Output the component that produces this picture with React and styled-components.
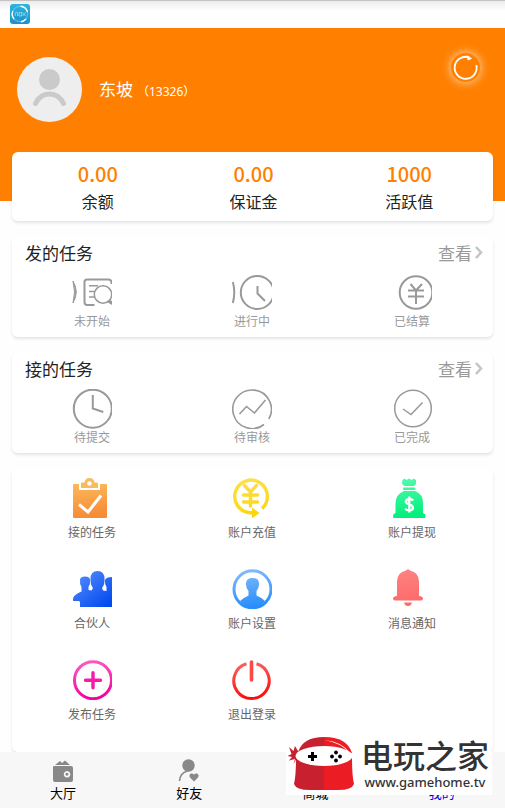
import React from 'react';
import styled, { createGlobalStyle } from 'styled-components';

const GlobalStyle = createGlobalStyle`
  * {
    box-sizing: border-box;
  }
  body {
    margin: 0;
    background: #fefefe;
    color: #222;
    font-family: "Noto Sans", "Noto Sans CJK SC", sans-serif;
  }
  h2, p {
    margin: 0;
  }
`;

const NotStartedIcon = () => (
  <Icon viewBox="0 0 40 40">
    <path d="M1 8Q7.500 19 1 30Q4 19 1 8Z" fill="#999" strokeWidth="1" />
    <path d="M39.500 11V9.500q0-3-3-3H15q-2.500 0-2.500 2.500v20q0 3 2.500 3h7.500" />
    <path d="M17 12.800h9M17 18.500h5M17 24h6" strokeWidth="1.500" />
    <circle cx="31" cy="21.500" r="8.700" strokeWidth="1.500" />
    <path d="M35 29l3-2 2 1v4z" fill="#999" stroke="none" />
  </Icon>
);

const RunningIcon = () => (
  <Icon viewBox="0 0 40 40">
    <path d="M.8 9Q3.800 19 .8 30" />
    <circle cx="25.300" cy="19.500" r="16.500" />
    <path d="M25.500 13v7.500l7.500 7.500" />
  </Icon>
);

const SettledIcon = () => (
  <Icon viewBox="0 0 40 40">
    <circle cx="24" cy="19.500" r="16.300" />
    <path d="M18.500 11l5.500 6.500 6-6.500M16 17.500h16M16 23.500h16M24 17v14" />
  </Icon>
);

const PendingIcon = () => (
  <Icon viewBox="0 0 40 40">
    <circle cx="20.800" cy="19.700" r="19" />
    <path d="M20.800 6v13.500l10.500 3.500" />
  </Icon>
);

const ReviewIcon = () => (
  <Icon viewBox="0 0 40 40" strokeWidth="1.600">
    <path d="M32 35.500A19.300 19.300 0 1 1 36.800 30" />
    <path d="M7.500 25l7-7.500 8 6.500 11-13" />
  </Icon>
);

const DoneIcon = () => (
  <Icon viewBox="0 0 40 40" strokeWidth="1.500">
    <circle cx="21" cy="19.500" r="18.300" />
    <path d="M11 20l8 5.500 11.500-12" />
  </Icon>
);

const ClipboardIcon = () => (
  <Icon viewBox="0 0 40 40">
    <Gradient id="clip" from="#fbc262" to="#f78b36" />
    <path d="M2 6h5v6h21V6h6q1 0 1 1v32q0 1-1 1H2q-1 0-1-1V7q0-1 1-1z" fill="url(#clip)" stroke="none" />
    <path d="M9 5.500q0-1 1-1h2.500Q13 0 17.500 0T22.500 4.500H25q1 0 1 1V10H9z" fill="#fabb5d" stroke="none" />
    <circle cx="17.500" cy="5.500" r="2.200" fill="#fff" stroke="none" />
    <path d="M7 26.500l9 7.500 13-16.500" stroke="#fff" strokeWidth="3" />
  </Icon>
);

const RechargeIcon = () => (
  <Icon viewBox="0 0 40 40">
    <Gradient id="yen" from="#fbe24e" to="#fdd50e" />
    <g stroke="url(#yen)" strokeWidth="3.400">
      <path d="M30 30.500A16.300 16.300 0 1 0 18 34.700h5" />
      <path d="M12.500 7.500l6 6.500 6-6.500M11.500 17h14M11.500 24h14M18.500 14v14" strokeLinecap="round" />
    </g>
    <path d="M20 29.500l7.500 5.500-7.500 5.500z" fill="#fdd50e" stroke="none" />
  </Icon>
);

const WithdrawIcon = () => (
  <Icon viewBox="0 0 40 40">
    <Gradient id="bag" from="#55fbb0" to="#03ef7c" />
    <g fill="url(#bag)" stroke="none">
      <path d="M10.500 2l2-1.500 2 1.500L17 .5 19.500 2l2-1.500L24 2v4l-2.500 2h-9L10 6z" />
      <rect x="11" y="9.500" width="12.500" height="2.500" rx="1" />
      <path d="M12 13h11q8 3 8 12v10q2.500.5 2.500 3 0 2.500-2 2.500h-29Q1 40.500 1 38q0-2.500 2.500-3V25Q4 16 12 13z" />
    </g>
    <path d="M21.300 22.500q-1.500-1.500-4-1.500T13.800 23.500q0 2 3.500 2.800T21 29.800q0 2.500-3.700 2.500-2.800 0-4.300-1.600M17.300 18.500v16" stroke="#fff" strokeWidth="2.300" />
  </Icon>
);

const PartnerIcon = () => (
  <Icon viewBox="0 0 40 40">
    <Gradient id="team" from="#5f94fd" to="#0249f0" diagonal />
    <path
      d="M1 30q0-4 8.500-7.500V18q-2-3-1.500-7.500Q8.500 7.500 13 7.500t5 3q.5 4.500-1.500 7.500v3l3 .5 1.500-2.500q-3-4-2.500-9Q18.500 2 25.500 2T32.500 10q.5 5-2.500 9l1 2.500 3.500.5v-4q-2-3-1.500-7 1-3 7-3v30H8v-5l-1-1H1z"
      fill="url(#team)"
      stroke="none"
    />
  </Icon>
);

const AccountIcon = () => (
  <Icon viewBox="0 0 40 40">
    <Gradient id="acc" from="#89bffd" to="#278efc" />
    <circle cx="20.500" cy="20.300" r="18.500" stroke="url(#acc)" strokeWidth="3" />
    <path d="M8 32q4-3.500 8.500-5.500V22q-3-4-2.500-8 .5-5 6.500-5t6.500 5q.500 4-2.500 8v4.500q5 2 8.500 5.500-5 6-12.500 6T8 32z" fill="url(#acc)" stroke="none" />
  </Icon>
);

const BellIcon = () => (
  <Icon viewBox="0 0 40 40">
    <Gradient id="bell" from="#fe8484" to="#fd6767" />
    <g fill="url(#bell)" stroke="none">
      <path d="M14 1.500q2-2.500 4 0 9 2 9 11V27q4 .5 4 2.500T29 31.500H3q-2 0-2-2T5 27V12.500q0-9 9-11z" />
      <path d="M12 33.500h8q-1 3.500-4 3.500t-4-3.500z" />
    </g>
  </Icon>
);

const PublishIcon = () => (
  <Icon viewBox="0 0 40 40">
    <Gradient id="pub" from="#fb63c6" to="#f3019d" />
    <circle cx="21" cy="20.200" r="18.500" stroke="url(#pub)" strokeWidth="3" />
    <path d="M13.500 20.200h15M21 12.700v15" stroke="#f51ba8" strokeWidth="3.400" strokeLinecap="round" />
  </Icon>
);

const LogoutIcon = () => (
  <Icon viewBox="0 0 40 40">
    <Gradient id="out" from="#fe6b6b" to="#fb0d0d" />
    <path d="M14.500 3.800A17.700 17.700 0 1 0 24.500 3.800" stroke="url(#out)" strokeWidth="3" />
    <path d="M19.500 2v18" stroke="#fc4a4a" strokeWidth="3.600" strokeLinecap="round" />
  </Icon>
);

const Gradient = ({ id, from, to, diagonal }) => (
  <defs>
    <linearGradient id={id} gradientUnits="userSpaceOnUse" x1="0" y1="0" x2={diagonal ? 32 : 6} y2="40">
      <stop offset="0" stopColor={from} />
      <stop offset="1" stopColor={to} />
    </linearGradient>
  </defs>
);

const HallIcon = () => (
  <NavIcon viewBox="0 0 24 24">
    <path d="M4 6l5-4 2 2 3-2.500L19 6z" />
    <path fillRule="evenodd" d="M3 7h17q2 0 2 2v12q0 2-2 2H4q-2 0-2-2V8q0-1 1-1zm13 5a3.300 3.300 0 1 0 .1 0zm0 1.800a1.500 1.500 0 1 1-.1 0z" />
  </NavIcon>
);

const FriendIcon = () => (
  <NavIcon viewBox="0 0 24 24">
    <circle cx="11.500" cy="6.500" r="6.200" />
    <path d="M2.500 22Q3 14 10.500 12" fill="none" stroke="#888" strokeWidth="1.600" />
    <path d="M17 22.500l-4-4q-1.500-3 1-4 2-.5 3 1.200 1-1.700 3-1.200 2.500 1 1 4z" />
  </NavIcon>
);

const MallIcon = () => (
  <NavIcon viewBox="0 0 24 24">
    <path d="M4 3h16l2 7H2zM4 12h16v10H4z" />
  </NavIcon>
);

const MineIcon = () => (
  <NavIcon viewBox="0 0 24 24">
    <circle cx="12" cy="7" r="5" />
    <path d="M3 22q1-8 9-8t9 8z" />
  </NavIcon>
);

const stats = [
  { label: '余额', value: '0.00' },
  { label: '保证金', value: '0.00' },
  { label: '活跃值', value: '1000' },
];

const taskGroups = [
  {
    title: '发的任务',
    items: [
      { label: '未开始', icon: <NotStartedIcon /> },
      { label: '进行中', icon: <RunningIcon /> },
      { label: '已结算', icon: <SettledIcon /> },
    ],
  },
  {
    title: '接的任务',
    items: [
      { label: '待提交', icon: <PendingIcon /> },
      { label: '待审核', icon: <ReviewIcon /> },
      { label: '已完成', icon: <DoneIcon /> },
    ],
  },
];

const menu = [
  { label: '接的任务', icon: <ClipboardIcon /> },
  { label: '账户充值', icon: <RechargeIcon /> },
  { label: '账户提现', icon: <WithdrawIcon /> },
  { label: '合伙人', icon: <PartnerIcon /> },
  { label: '账户设置', icon: <AccountIcon /> },
  { label: '消息通知', icon: <BellIcon /> },
  { label: '发布任务', icon: <PublishIcon /> },
  { label: '退出登录', icon: <LogoutIcon /> },
];

const tabs = [
  { label: '大厅', icon: <HallIcon /> },
  { label: '好友', icon: <FriendIcon /> },
  { label: '商城', icon: <MallIcon /> },
  { label: '我的', icon: <MineIcon />, active: true },
];

const NoxLogo = () => (
  <svg width="20" height="20" viewBox="0 0 20 20" aria-hidden="true">
    <defs>
      <linearGradient id="nox" x1="0" y1="0" x2="0" y2="1">
        <stop offset="0" stopColor="#2cb5dd" />
        <stop offset="1" stopColor="#1c90cb" />
      </linearGradient>
    </defs>
    <rect width="20" height="20" rx="3" fill="url(#nox)" />
    <circle cx="10" cy="10" r="7.700" fill="none" stroke="#5cbfe6" strokeWidth="1.200" />
    <path d="M10.500 2.300A7.700 7.700 0 0 1 17.500 8M2.800 7A7.700 7.700 0 0 0 4 15M11 17.700A7.700 7.700 0 0 0 16 15" fill="none" stroke="#fff" strokeWidth="1.400" />
    <path d="M5.200 12V9.500q0-1.200 1.200-1.200t1.200 1.200V12M9 8.500h2.500V12H9zM12.500 8.500l3 3.500M15.500 8.500l-3 3.500" fill="none" stroke="#b5e4f6" strokeWidth=".7" />
  </svg>
);

const NinjaLogo = () => (
  <svg width="68" height="56" viewBox="0 0 68 56" aria-hidden="true">
    <path d="M38 1Q17 1 12 16l26 3z" fill="#c8202f" />
    <path d="M38 1q23 0 28 16l-28 3z" fill="#ec1c24" />
    <path d="M39 4q17 2 24 12Q54 7 39 4z" fill="#fff" />
    <path d="M12 15L9 10 7.500 15 3 11l2.500 7-4 2 4.500 1-3 3.500 6-1.500-1.500 5L12 20z" fill="#c8202f" />
    <path d="M38 20L10 22q0 18-2 26 2 6 16 6h14z" fill="#c8202f" />
    <path d="M38 20l28 2q0 18 2 26-2 6-16 6H38z" fill="#ec1c24" />
    <ellipse cx="38" cy="20" rx="28.500" ry="10" fill="#fff" />
    <path d="M22 20.500h9M26.500 16v9" stroke="#000" strokeWidth="3" />
    <g fill="#000">
      <circle cx="50" cy="16.500" r="1.900" />
      <circle cx="50" cy="24.500" r="1.900" />
      <circle cx="46" cy="20.500" r="1.900" />
      <circle cx="54" cy="20.500" r="1.900" />
    </g>
  </svg>
);

const App = () => {
  return (
    <Page>
      <GlobalStyle />
      <StatusBar>
        <NoxLogo />
      </StatusBar>
      <Header>
        <Profile>
          <Avatar viewBox="0 0 65 65" aria-hidden="true">
            <circle cx="32.500" cy="32.500" r="32.500" fill="#eee" />
            <circle cx="32.500" cy="22.500" r="10.500" fill="#cacaca" />
            <path d="M18.500 46.500Q23 37 32.500 37t14 9.500" fill="none" stroke="#cacaca" strokeWidth="5" strokeLinecap="round" />
          </Avatar>
          <Name>东坡</Name>
          <UserId>（13326）</UserId>
        </Profile>
        <RefreshButton type="button" aria-label="刷新">
          <svg width="29" height="29" viewBox="0 0 29 29" fill="none" stroke="#fff" strokeWidth="1.800">
            <path d="M25.300 12A11 11 0 1 1 18 4.300" />
            <path d="M16.500 2.800l4 2.700-3.500 1.500z" fill="#fff" strokeWidth=".8" />
          </svg>
        </RefreshButton>
      </Header>
      <Main>
        <StatsCard>
          {stats.map((item) => (
            <Stat key={item.label}>
              <StatValue>{item.value}</StatValue>
              <StatLabel>{item.label}</StatLabel>
            </Stat>
          ))}
        </StatsCard>
        {taskGroups.map((group) => (
          <Card key={group.title}>
            <CardHead>
              <CardTitle>{group.title}</CardTitle>
              <MoreLink href="#">
                查看
                <svg width="10" height="16" viewBox="0 0 10 16" fill="none" stroke="#c4c4c8" strokeWidth="2.500" aria-hidden="true">
                  <path d="M2 3l5 5.500L2 14" />
                </svg>
              </MoreLink>
            </CardHead>
            <Grid>
              {group.items.map((item) => (
                <TaskItem href="#" key={item.label}>
                  {item.icon}
                  <span>{item.label}</span>
                </TaskItem>
              ))}
            </Grid>
          </Card>
        ))}
        <MenuCard>
          <Grid>
            {menu.map((item) => (
              <MenuItem href="#" key={item.label}>
                {item.icon}
                <span>{item.label}</span>
              </MenuItem>
            ))}
          </Grid>
        </MenuCard>
      </Main>
      <NavBar>
        {tabs.map((tab) => (
          <NavItem href="#" key={tab.label} $active={tab.active}>
            {tab.icon}
            <span>{tab.label}</span>
          </NavItem>
        ))}
      </NavBar>
      <SiteBadge>
        <NinjaLogo />
        <BadgeText>
          <BadgeName>电玩之家</BadgeName>
          <BadgeUrl>www.gamehome.tv</BadgeUrl>
        </BadgeText>
      </SiteBadge>
    </Page>
  );
};

export default App;

const Page = styled.div`
  display: flex;
  flex-direction: column;
  min-height: 100vh;
`;

const StatusBar = styled.div`
  height: 28px;
  padding: 3px 10px;
  border-top: 1px solid #c4c4c4;
  background: linear-gradient(#ececec, #fff 10px);
`;

const Header = styled.header`
  display: flex;
  justify-content: space-between;
  align-items: flex-start;
  height: 173px;
  padding: 25px 25px 0 17px;
  background: #ff8000;
  color: #fff;
`;

const Profile = styled.div`
  display: flex;
  align-items: center;
  padding-top: 4px;
`;

const Avatar = styled.svg`
  width: 65px;
  height: 65px;
  margin-right: 17px;
`;

const Name = styled.span`
  margin-right: 4px;
  font-size: 17px;
  line-height: 20px;
`;

const UserId = styled.span`
  padding-top: 2px;
  font-size: 12px;
`;

const RefreshButton = styled.button`
  width: 29px;
  height: 29px;
  padding: 0;
  border: none;
  border-radius: 50%;
  background: transparent;
  box-shadow: 0 0 8px 1px rgba(255, 255, 255, 0.6);
  cursor: pointer;

  svg {
    display: block;
  }
`;

const Main = styled.main`
  display: flex;
  flex-direction: column;
  flex: 1;
  gap: 15px;
  margin-top: -49px;
  padding: 0 12px;
`;

const Card = styled.section`
  padding-bottom: 7px;
  border-radius: 6px;
  background: #fff;
  box-shadow: 0 2px 3px rgba(0, 0, 0, 0.1);
`;

const StatsCard = styled(Card)`
  display: flex;
  padding: 8px 6px 5px 8px;
`;

const Stat = styled.div`
  flex: 1;
  text-align: center;
`;

const StatValue = styled.p`
  color: #ff8000;
  font-family: "Noto Sans CJK SC", sans-serif;
  font-size: 20px;
  font-weight: 500;
  line-height: 28px;
`;

const StatLabel = styled.p`
  font-size: 16px;
  line-height: 28px;
`;

const CardHead = styled.div`
  display: flex;
  justify-content: space-between;
  align-items: center;
  height: 37px;
  padding: 0 9px 5px 13px;
`;

const CardTitle = styled.h2`
  font-size: 17px;
  font-weight: 400;
`;

const MoreLink = styled.a`
  display: flex;
  align-items: center;
  gap: 2px;
  color: #999;
  font-size: 17px;
  text-decoration: none;
`;

const Grid = styled.div`
  display: grid;
  grid-template-columns: repeat(3, 1fr);
  padding-right: 1px;
`;

const Icon = styled.svg.attrs((props) => ({
  fill: 'none',
  stroke: '#999',
  strokeWidth: props.strokeWidth || 2,
  'aria-hidden': true,
}))`
  display: block;
  width: 40px;
  height: 40px;
`;

const TaskItem = styled.a`
  display: flex;
  flex-direction: column;
  align-items: center;
  gap: 1px;
  color: #999;
  font-size: 12px;
  line-height: 16px;
  text-decoration: none;
`;

const MenuItem = styled(TaskItem)`
  gap: 7px;
  height: 91px;
  color: #666;
`;

const MenuCard = styled(Card)`
  flex: 1;
  padding: 10px 0 0;
`;

const NavBar = styled.nav`
  display: flex;
  height: 56px;
  background: #f7f7f7;
`;

const NavItem = styled.a`
  display: flex;
  flex: 1;
  flex-direction: column;
  align-items: center;
  padding-top: 7px;
  color: ${(props) => (props.$active ? '#00e' : '#000')};
  font-size: 13px;
  line-height: 20px;
  text-decoration: none;
`;

const NavIcon = styled.svg.attrs({ fill: '#888', 'aria-hidden': true })`
  width: 24px;
  height: 24px;
`;

const SiteBadge = styled.div`
  position: fixed;
  right: 13px;
  bottom: 13px;
  display: flex;
  align-items: center;
  height: 62px;
  padding-right: 3px;
  background: #fff;
`;

const BadgeText = styled.div`
  display: flex;
  flex-direction: column;
  align-items: center;
  padding-left: 7px;
  color: #333;
`;

const BadgeName = styled.span`
  font-size: 32px;
  font-weight: 500;
  line-height: 36px;
`;

const BadgeUrl = styled.span`
  font-size: 13px;
  font-weight: 500;
  line-height: 16px;
`;
